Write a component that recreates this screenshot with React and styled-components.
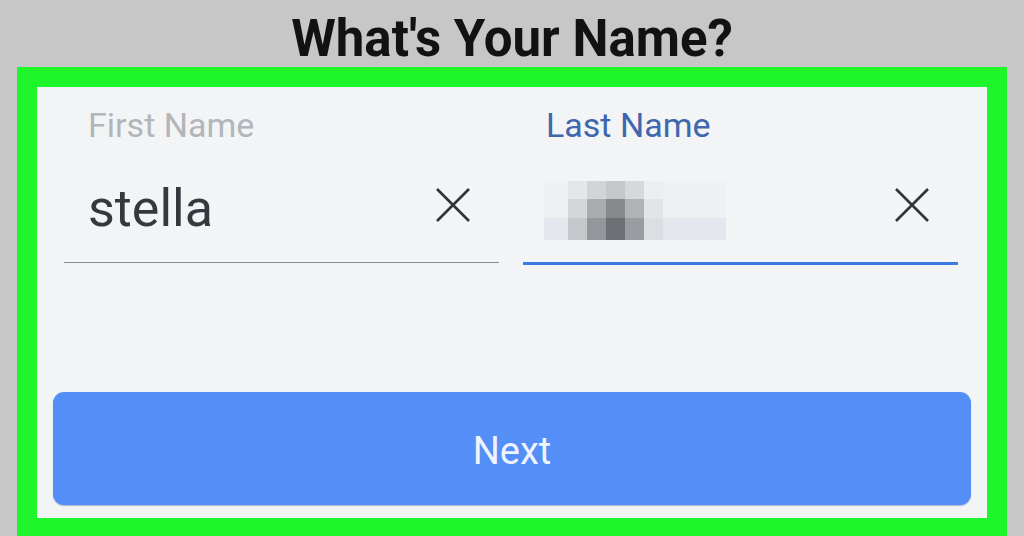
import React from 'react'
import styled, { createGlobalStyle } from 'styled-components'

const GlobalStyle = createGlobalStyle`
    html, body {
        margin: 0;
        padding: 0;
        background: #c7c7c7;
        overflow: hidden;
        font-family: Roboto, "Liberation Sans", Arial, sans-serif;
    }
`

const Page = styled.div`
    width: 1024px;
    height: 536px;
    display: flex;
    flex-direction: column;
`

const Title = styled.h1`
    margin: 0;
    padding-top: 10px;
    font-size: 51px;
    line-height: 57px;
    font-weight: 700;
    text-align: center;
    color: #121212;
`

const Frame = styled.div`
    margin: 0 17px;
    border: 20px solid #1ff52b;
`

const Panel = styled.form`
    height: 431px;
    box-sizing: border-box;
    background: #f2f4f6;
    padding: 18px 16px 13px;
    display: flex;
    flex-direction: column;
`

const Fields = styled.div`
    display: grid;
    grid-template-columns: 435px 435px;
    gap: 24px;
    margin: 0 11px;
`

const Field = styled.div`
    display: flex;
    flex-direction: column;
`

const Label = styled.label`
    padding-left: ${ props => props.$indent }px;
    font-size: 34px;
    line-height: 40px;
    color: ${ props => props.$active ? '#4066ae' : '#b2b6ba' };
`

const InputRow = styled.div`
    margin-top: 34px;
    height: ${ props => props.$active ? 86 : 84 }px;
    box-sizing: border-box;
    padding: 0 28px 0 ${ props => props.$indent }px;
    display: flex;
    align-items: flex-start;
    justify-content: space-between;
    border-bottom: ${ props => props.$active ? '3px solid #3c7be2' : '1.5px solid #8c8e92' };
`

const Value = styled.span`
    font-size: 52px;
    line-height: 60px;
    color: #343940;
`

const ClearButton = styled.button`
    margin-top: 9px;
    width: 36px;
    height: 34px;
    padding: 0;
    border: none;
    background: none;
    display: flex;
    align-items: center;
    justify-content: center;
`

const Blur = styled.div`
    margin-top: 2px;
    display: grid;
    grid-template-columns: 24px repeat(5, 19px) 63px;
    grid-template-rows: 18px 19px 22px;
`

const Cell = styled.div`
    background: ${ props => props.$c };
`

const NextButton = styled.button`
    margin-top: auto;
    height: 113px;
    border: none;
    border-radius: 11px;
    background: #548ef7;
    box-shadow: 0 1px 1px rgba(40, 70, 130, 0.35);
    color: #eef3ff;
    font-family: Roboto, "Liberation Sans", Arial, sans-serif;
    font-size: 38px;
    padding-top: 6px;
`

const blurCells = [
    ['#eef0f2', '#e4e6e9', '#d2d4d7', '#c5c7ca', '#d6d8db', '#eceef0', '#eef0f2'],
    ['#eef0f2', '#d4d6d9', '#a9abaf', '#87898d', '#b0b2b6', '#e2e4e7', '#eef0f2'],
    ['#e4e8ee', '#c5c7cb', '#94969b', '#6d7075', '#9a9ca1', '#dcdee2', '#e4e8ee'],
]

const CloseIcon = () => (
    <svg width="36" height="34" viewBox="0 0 36 34">
        <path d="M2 1 L34 33 M34 1 L2 33" stroke="#303338" strokeWidth="2.6" fill="none" />
    </svg>
)

const App = () => {
    return (
        <Page>
            <GlobalStyle />
            <Title>What's Your Name?</Title>
            <Frame>
                <Panel onSubmit={ e => e.preventDefault() }>
                    <Fields>
                        <Field>
                            <Label $indent={ 24 }>First Name</Label>
                            <InputRow $indent={ 24 }>
                                <Value>stella</Value>
                                <ClearButton type="button"><CloseIcon /></ClearButton>
                            </InputRow>
                        </Field>
                        <Field>
                            <Label $indent={ 23 } $active>Last Name</Label>
                            <InputRow $indent={ 21 } $active>
                                <Blur>
                                    { blurCells.flat().map((c, i) => <Cell key={ i } $c={ c } />) }
                                </Blur>
                                <ClearButton type="button"><CloseIcon /></ClearButton>
                            </InputRow>
                        </Field>
                    </Fields>
                    <NextButton type="submit">Next</NextButton>
                </Panel>
            </Frame>
        </Page>
    )
}

export default App
